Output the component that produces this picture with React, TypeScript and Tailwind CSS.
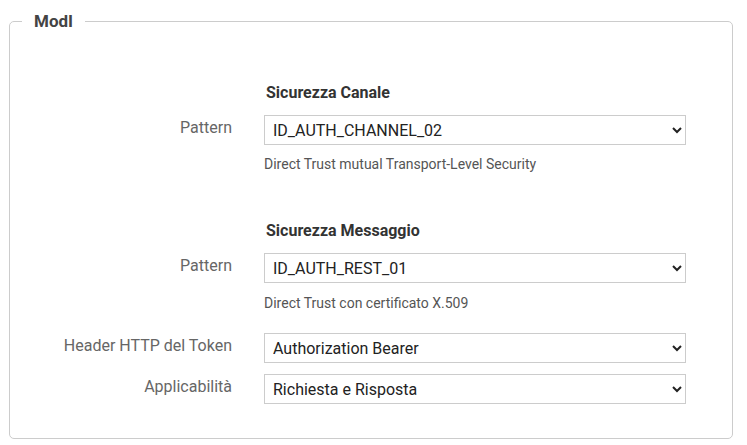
import { ReactNode } from "react";

interface IRowProps {
  label?: string;
  children: ReactNode;
}

function Row({ label, children }: IRowProps) {
  return (
    <div className="flex items-start">
      <div className="w-[222px] shrink-0 text-right text-[16px] leading-[26px] text-[#666]">
        {label}
      </div>
      <div className="ml-[32px] w-[422px]">{children}</div>
    </div>
  );
}

function Select({ value }: { value: string }) {
  return (
    <select
      defaultValue={value}
      className="block h-[30px] w-full border border-[#ccc] bg-white pl-[4px] pr-2 text-[16px] text-[#222] rounded-none"
    >
      <option>{value}</option>
    </select>
  );
}

export default function App() {
  return (
    <div className="bg-white pl-[9px] pr-[14px] pt-[11px] font-['Roboto',sans-serif] min-h-[445px]">
      <fieldset className="rounded-[5px] border border-[#ccc] pb-[34px]">
        <legend className="ml-[12px] px-[12px] text-[17px] font-bold leading-[20px] text-[#444]">
          ModI
        </legend>

        {/* Sicurezza Canale */}
        <div className="mt-[52px]">
          <Row>
            <div className="pl-[2px] text-[16px] font-bold leading-[20px] text-[#333]">
              Sicurezza Canale
            </div>
          </Row>
        </div>
        <div className="mt-[12px]">
          <Row label="Pattern">
            <Select value="ID_AUTH_CHANNEL_02" />
            <div className="mt-[10px] text-[14px] leading-[18px] text-[#555]">
              Direct Trust mutual Transport-Level Security
            </div>
          </Row>
        </div>

        {/* Sicurezza Messaggio */}
        <div className="mt-[48px]">
          <Row>
            <div className="pl-[2px] text-[16px] font-bold leading-[20px] text-[#333]">
              Sicurezza Messaggio
            </div>
          </Row>
        </div>
        <div className="mt-[12px]">
          <Row label="Pattern">
            <Select value="ID_AUTH_REST_01" />
            <div className="mt-[11px] text-[14px] leading-[18px] text-[#555]">
              Direct Trust con certificato X.509
            </div>
          </Row>
        </div>

        <div className="mt-[21px]">
          <Row label="Header HTTP del Token">
            <Select value="Authorization Bearer" />
          </Row>
        </div>
        <div className="mt-[11px]">
          <Row label="Applicabilità">
            <Select value="Richiesta e Risposta" />
          </Row>
        </div>
      </fieldset>
    </div>
  );
}
